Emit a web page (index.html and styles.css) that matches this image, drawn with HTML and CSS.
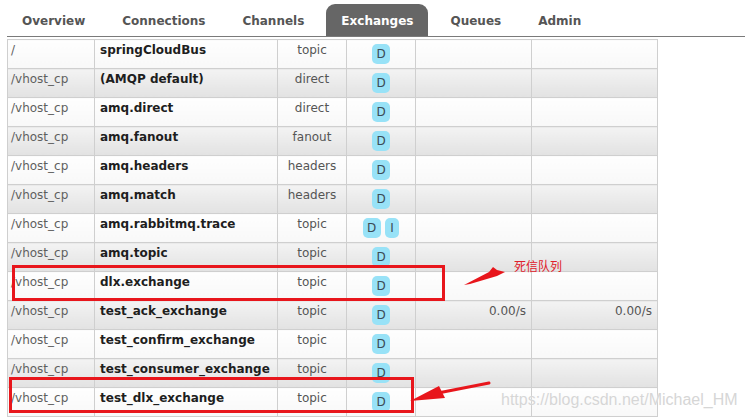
FILE: index.html
```html
<!DOCTYPE html>
<html>
<head>
<meta charset="utf-8">
<link rel="stylesheet" href="styles.css">
</head>
<body>
<div class="page">
  <ul class="tabs">
    <li><a>Overview</a></li>
    <li><a>Connections</a></li>
    <li><a>Channels</a></li>
    <li class="active"><a>Exchanges</a></li>
    <li><a>Queues</a></li>
    <li><a>Admin</a></li>
  </ul>
  <table class="list">
    <colgroup>
      <col class="c-vhost"><col class="c-name"><col class="c-type"><col class="c-feat"><col class="c-rate1"><col class="c-rate2">
    </colgroup>
    <tbody>
      <tr class="alt2"><td class="vhost">/</td><td class="name">springCloudBus</td><td class="type">topic</td><td class="feat"><div class="badges"><span class="badge">D</span></div></td><td class="rate"></td><td class="rate"></td></tr>
      <tr class="alt1"><td class="vhost">/vhost_cp</td><td class="name">(AMQP default)</td><td class="type">direct</td><td class="feat"><div class="badges"><span class="badge">D</span></div></td><td class="rate"></td><td class="rate"></td></tr>
      <tr class="alt2"><td class="vhost">/vhost_cp</td><td class="name">amq.direct</td><td class="type">direct</td><td class="feat"><div class="badges"><span class="badge">D</span></div></td><td class="rate"></td><td class="rate"></td></tr>
      <tr class="alt1"><td class="vhost">/vhost_cp</td><td class="name">amq.fanout</td><td class="type">fanout</td><td class="feat"><div class="badges"><span class="badge">D</span></div></td><td class="rate"></td><td class="rate"></td></tr>
      <tr class="alt2"><td class="vhost">/vhost_cp</td><td class="name">amq.headers</td><td class="type">headers</td><td class="feat"><div class="badges"><span class="badge">D</span></div></td><td class="rate"></td><td class="rate"></td></tr>
      <tr class="alt1"><td class="vhost">/vhost_cp</td><td class="name">amq.match</td><td class="type">headers</td><td class="feat"><div class="badges"><span class="badge">D</span></div></td><td class="rate"></td><td class="rate"></td></tr>
      <tr class="alt2"><td class="vhost">/vhost_cp</td><td class="name">amq.rabbitmq.trace</td><td class="type">topic</td><td class="feat"><div class="badges"><span class="badge">D</span><span class="badge badge-i">I</span></div></td><td class="rate"></td><td class="rate"></td></tr>
      <tr class="alt1"><td class="vhost">/vhost_cp</td><td class="name">amq.topic</td><td class="type">topic</td><td class="feat"><div class="badges"><span class="badge">D</span></div></td><td class="rate"></td><td class="rate"></td></tr>
      <tr class="alt2"><td class="vhost">/vhost_cp</td><td class="name">dlx.exchange</td><td class="type">topic</td><td class="feat"><div class="badges"><span class="badge">D</span></div></td><td class="rate"></td><td class="rate"></td></tr>
      <tr class="alt1"><td class="vhost">/vhost_cp</td><td class="name">test_ack_exchange</td><td class="type">topic</td><td class="feat"><div class="badges"><span class="badge">D</span></div></td><td class="rate">0.00/s</td><td class="rate">0.00/s</td></tr>
      <tr class="alt2"><td class="vhost">/vhost_cp</td><td class="name">test_confirm_exchange</td><td class="type">topic</td><td class="feat"><div class="badges"><span class="badge">D</span></div></td><td class="rate"></td><td class="rate"></td></tr>
      <tr class="alt1"><td class="vhost">/vhost_cp</td><td class="name">test_consumer_exchange</td><td class="type">topic</td><td class="feat"><div class="badges"><span class="badge">D</span></div></td><td class="rate"></td><td class="rate"></td></tr>
      <tr class="alt2"><td class="vhost">/vhost_cp</td><td class="name">test_dlx_exchange</td><td class="type">topic</td><td class="feat"><div class="badges"><span class="badge">D</span></div></td><td class="rate"></td><td class="rate"></td></tr>
    </tbody>
  </table>

  <div class="mark mark-1"></div>
  <div class="mark mark-2"></div>
  <svg class="arrows" width="745" height="419" viewBox="0 0 745 419">
    <polygon points="464,285 489,272 493,267 497,270 505,272 497,276 470,284" fill="#e8161c"/>
    <line x1="489" y1="383" x2="438" y2="393" stroke="#e8161c" stroke-width="3" stroke-linecap="round"/>
    <polygon points="410,401 439,386 445,398" fill="#e8161c"/>
  </svg>
  <div class="note">死信队列</div>
  <div class="watermark">https://blog.csdn.net/Michael_HM</div>
</div>
</body>
</html>
```

FILE: styles.css
```css
html, body {
  margin: 0;
  padding: 0;
  background: #fff;
}

body {
  font-family: "DejaVu Sans", Verdana, sans-serif;
  font-size: 12px;
  color: #333;
}

.page {
  position: relative;
  width: 745px;
  height: 419px;
  overflow: hidden;
}

.tabs {
  display: flex;
  align-items: flex-end;
  gap: 7px;
  list-style: none;
  margin: 0 0 0 7px;
  padding: 0;
  height: 36px;
  border-bottom: 1px solid #7a7a7a;
}

.tabs li a {
  display: block;
  padding: 10px 15px 8px;
  line-height: 14px;
  font-weight: bold;
  color: #555;
  border-radius: 9px 9px 0 0;
}

.tabs li.active a {
  background: #666;
  color: #fff;
}

.list {
  margin: 2px 0 0 7px;
  border-collapse: collapse;
  table-layout: fixed;
  width: 650px;
}

.c-vhost { width: 87px; }
.c-name { width: 183px; }
.c-type { width: 69px; }
.c-feat { width: 69px; }
.c-rate1 { width: 116px; }
.c-rate2 { width: 126px; }

.list td {
  border: 1px solid #cfcfcf;
  height: 29px;
  box-sizing: border-box;
  padding: 3px 4px 0;
  line-height: 14px;
  vertical-align: top;
  white-space: nowrap;
  overflow: hidden;
}

.list tr.alt1 td {
  background: linear-gradient(#f3f3f3, #e2e2e2);
}

.list tr.alt2 td {
  background: linear-gradient(#fefefe, #f8f8f8);
}

.list td.vhost {
  color: #5f5f5f;
  padding-left: 3px;
}

.list td.name {
  font-weight: bold;
  color: #1e1e1e;
  padding-left: 5px;
}

.list td.type {
  text-align: center;
  color: #555;
}

.list td.rate {
  text-align: right;
  color: #555;
  padding-right: 5px;
}

.list td.feat {
  padding: 4px 0 0;
}

.badges {
  display: flex;
  justify-content: center;
  gap: 4px;
}

.badge {
  display: block;
  padding: 3px 4.5px;
  line-height: 14px;
  border-radius: 5px;
  background: #98e2f7;
  color: #3b4a55;
}

.badge-i {
  padding: 3px 5.5px;
}

.mark {
  position: absolute;
  border: 3px solid #e8161c;
  box-sizing: border-box;
}

.mark-1 {
  left: 12px;
  top: 265px;
  width: 433px;
  height: 36px;
}

.mark-2 {
  left: 9px;
  top: 377px;
  width: 405px;
  height: 36px;
}

.arrows {
  position: absolute;
  left: 0;
  top: 0;
}

.note {
  position: absolute;
  left: 514px;
  top: 258px;
  font-family: "Noto Sans CJK SC", sans-serif;
  font-size: 12px;
  line-height: 16px;
  color: #e0202a;
}

.watermark {
  position: absolute;
  left: 501px;
  top: 390px;
  font-family: "Liberation Sans", Arial, sans-serif;
  font-size: 16px;
  line-height: 20px;
  color: #d6d6d6;
  text-shadow: 0 0 1px #fff;
}
```
